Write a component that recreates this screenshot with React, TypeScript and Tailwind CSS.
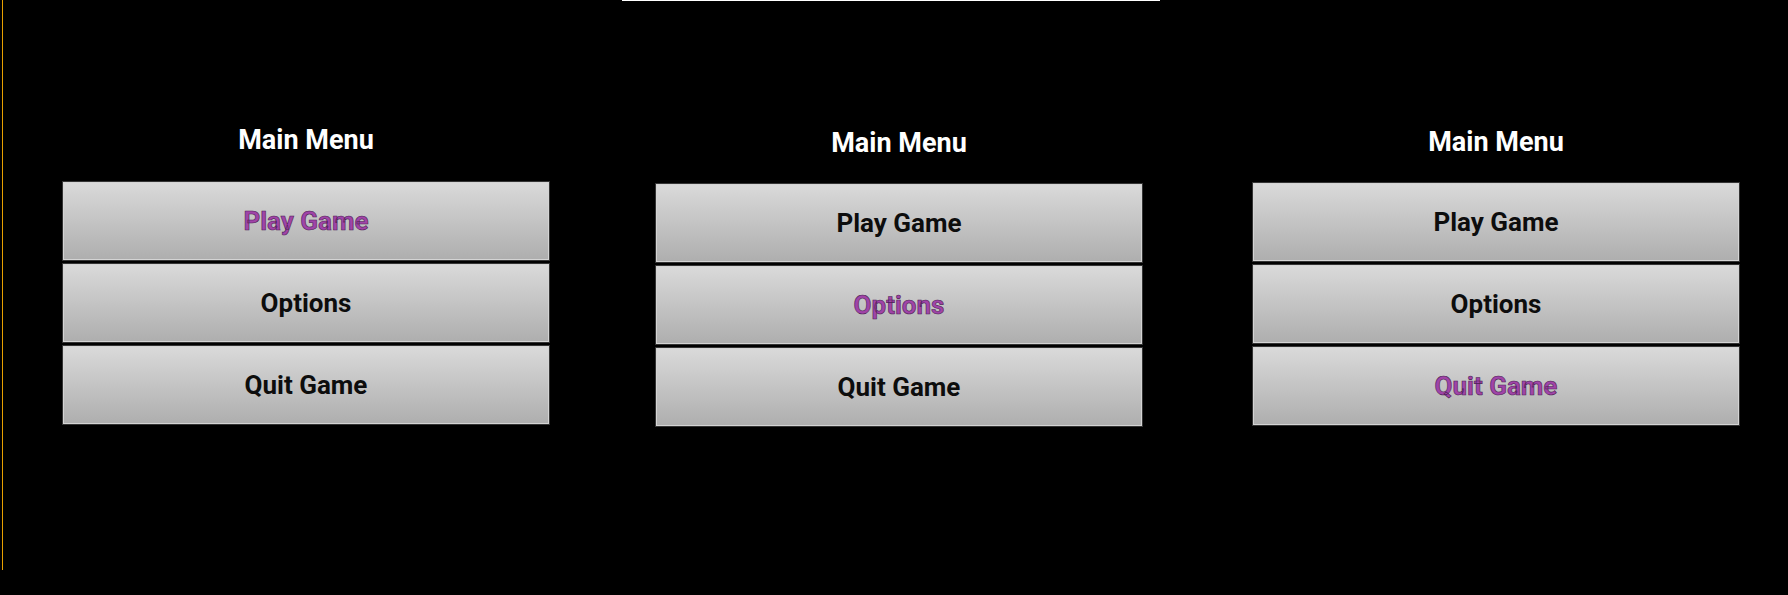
const ITEMS = ['Play Game', 'Options', 'Quit Game'];

interface MenuPanelProps {
  active: number;
  className: string;
  titleGap: string;
}

function MenuPanel({ active, className, titleGap }: MenuPanelProps) {
  return (
    <div className={`flex flex-col w-[488px] ${className}`}>
      <h2
        className={`text-center text-white font-bold text-[27px] leading-[34px] font-['Roboto','Liberation_Sans',sans-serif] ${titleGap}`}
      >
        Main Menu
      </h2>
      <div className="flex flex-col gap-[2px]">
        {ITEMS.map((label, i) => (
          <button
            key={label}
            className="h-[80px] w-full border border-[#343434] bg-gradient-to-b from-[#dadada] to-[#aeaeae] shadow-[inset_0_0_0_1px_#d4d4d4] flex items-center justify-center"
          >
            <span
              className={`font-bold text-[26px] font-['Roboto','Liberation_Sans',sans-serif] ${
                i === active
                  ? 'text-[#a044a8] [-webkit-text-stroke:0.6px_#4d1f54]'
                  : 'text-[#0d0d0d]'
              }`}
            >
              {label}
            </span>
          </button>
        ))}
      </div>
    </div>
  );
}

export default function App() {
  return (
    <div className="w-[1788px] h-[595px] bg-black overflow-hidden">
      <div className="ml-[2px] h-[570px] border-l border-[#e8a000]">
        {/* top white strip */}
        <div className="ml-[619px] w-[538px] h-px bg-white" />

        <div className="flex items-start">
          <MenuPanel active={0} className="ml-[59px] mt-[122px]" titleGap="mb-[24px]" />
          <MenuPanel active={1} className="ml-[105px] mt-[125px]" titleGap="mb-[23px]" />
          <MenuPanel active={2} className="ml-[109px] mt-[124px]" titleGap="mb-[23px]" />
        </div>
      </div>
    </div>
  );
}
